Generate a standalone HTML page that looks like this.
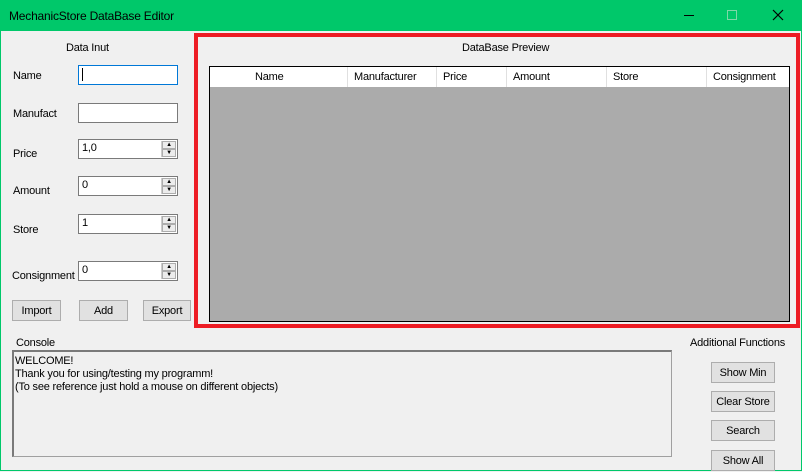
<!DOCTYPE html><html><head><style>
*{box-sizing:border-box;margin:0;padding:0}
body{width:802px;height:471px;background:#f0f0f0;font-family:"Liberation Sans",Arial,sans-serif;font-size:11px;color:#000;position:relative;overflow:hidden;letter-spacing:-0.2px}
.a{position:absolute}
.l{position:absolute;margin-top:2px}
.tb{left:0;top:0;width:802px;height:31px;background:#00c86a}
.tb span{position:absolute;left:9px;top:9px;font-size:12px}
.in{position:absolute;background:#fff;border:1px solid #7a7a7a;height:20px;padding:3px 3px;font-size:11px}
.sp{position:absolute;right:1px;top:1px;width:15px;height:16px;border-left:1px solid #ccc}
.sp div{height:8px;background:#ececec;border:1px solid #adadad;font-size:6px;line-height:6px;text-align:center}
.btn{position:absolute;background:#e1e1e1;border:1px solid #adadad;text-align:center;line-height:21px;font-size:11px}
.hd{position:absolute;top:0;height:20px;border-right:1px solid #e0e0e0;padding:4px 0 0 6px;background:#fff}
</style></head><body>
<div class="a" style="left:0;top:0;width:802px;height:471px;border:1px solid #00c86a"></div>
<div class="a tb"><span>MechanicStore DataBase Editor</span>
<div class="a" style="left:684px;top:15px;width:10px;height:1px;background:#000"></div>
<div class="a" style="left:727px;top:10px;width:10px;height:10px;border:1px solid #7fd8a8"></div>
<svg class="a" style="left:772px;top:9px" width="12" height="12"><path d="M1 1L11 11M11 1L1 11" stroke="#000" stroke-width="1.2"/></svg>
</div>
<div class="l" style="left:66px;top:40px">Data Inut</div>
<div class="l" style="left:13px;top:68px">Name</div>
<div class="in" style="left:78px;top:65px;width:100px;border-color:#0078d7;padding-top:2px"><span style="display:inline-block;width:1px;height:13px;background:#000"></span></div>
<div class="l" style="left:13px;top:106px">Manufact</div>
<div class="in" style="left:78px;top:103px;width:100px"></div>
<div class="l" style="left:13px;top:146px">Price</div>
<div class="in" style="left:78px;top:139px;width:100px;padding-top:2px">1,0<div class="sp"><div>▲</div><div>▼</div></div></div>
<div class="l" style="left:13px;top:183px">Amount</div>
<div class="in" style="left:78px;top:176px;width:100px;padding-top:2px">0<div class="sp"><div>▲</div><div>▼</div></div></div>
<div class="l" style="left:13px;top:222px">Store</div>
<div class="in" style="left:78px;top:214px;width:100px;padding-top:2px">1<div class="sp"><div>▲</div><div>▼</div></div></div>
<div class="l" style="left:12px;top:268px">Consignment</div>
<div class="in" style="left:78px;top:261px;width:100px;padding-top:2px">0<div class="sp"><div>▲</div><div>▼</div></div></div>
<div class="btn" style="left:12px;top:300px;width:49px;height:21px">Import</div>
<div class="btn" style="left:79px;top:300px;width:49px;height:21px">Add</div>
<div class="btn" style="left:143px;top:300px;width:48px;height:21px">Export</div>
<div class="a" style="left:194px;top:33px;width:606px;height:295px;border:4px solid #ed1c24"></div>
<div class="l" style="left:462px;top:40px">DataBase Preview</div>
<div class="a" style="left:209px;top:66px;width:581px;height:256px;background:#ababab;border:1px solid #000">
<div class="hd" style="left:0;width:40px"></div>
<div class="hd" style="left:39px;width:99px">Name</div>
<div class="hd" style="left:138px;width:89px">Manufacturer</div>
<div class="hd" style="left:227px;width:70px">Price</div>
<div class="hd" style="left:297px;width:100px">Amount</div>
<div class="hd" style="left:397px;width:100px">Store</div>
<div class="hd" style="left:497px;width:82px;border:none">Consignment</div>
</div>
<div class="l" style="left:16px;top:335px">Console</div>
<div class="l" style="left:690px;top:335px">Additional Functions</div>
<div class="a" style="left:12px;top:350px;width:660px;height:107px;border:1px solid #a0a0a0;border-top:2px solid #7a7a7a;border-left:2px solid #7a7a7a;padding:3px 1px;line-height:13px">WELCOME!<br>Thank you for using/testing my programm!<br>(To see reference just hold a mouse on different objects)</div>
<div class="btn" style="left:711px;top:362px;width:64px;height:21px">Show Min</div>
<div class="btn" style="left:711px;top:391px;width:64px;height:21px">Clear Store</div>
<div class="btn" style="left:711px;top:420px;width:64px;height:21px">Search</div>
<div class="btn" style="left:711px;top:450px;width:64px;height:21px">Show All</div>
</body></html>
